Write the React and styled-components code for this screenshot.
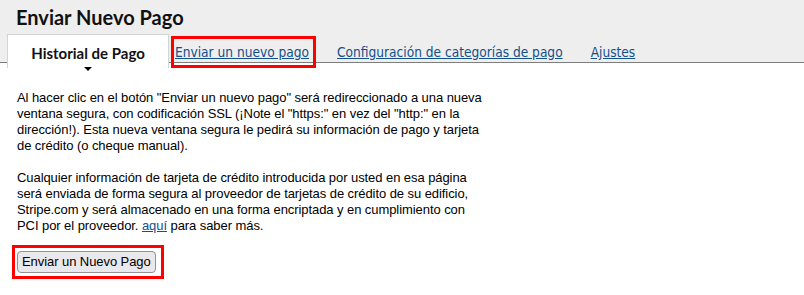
import React from 'react'
import styled, { createGlobalStyle, css } from 'styled-components'

const GlobalStyle = createGlobalStyle`
  html, body {
    margin: 0;
    padding: 0;
    background: #ffffff;
  }
  body {
    font-family: "Liberation Sans", Arial, sans-serif;
    color: #000;
  }
`

const Page = styled.div`
  width: 804px;
  min-height: 295px;
  background: #ffffff;
`

const Header = styled.header`
  background: #eeeeee;
  padding-top: 4px;
`

const Title = styled.h1`
  margin: 0 0 0 16px;
  height: 30px;
  font-family: Lato, "Noto Sans", sans-serif;
  font-weight: 700;
  font-size: 20px;
  line-height: 26px;
  color: #111;
`

const TabBar = styled.nav`
  display: flex;
  align-items: flex-start;
  padding-left: 7px;
  height: 28px;
  border-bottom: 1px solid #7d7d7d;
`

const ActiveTab = styled.div`
  display: flex;
  flex-direction: column;
  align-items: center;
  flex: 0 0 auto;
  width: 162px;
  height: 34px;
  box-sizing: border-box;
  padding-top: 9px;
  background: #ffffff;
  border: 1px solid #d4d4d4;
  border-bottom: none;
  font-family: Lato, "Noto Sans", sans-serif;
  font-weight: 700;
  font-size: 15px;
  line-height: 18px;
  color: #111;
  position: relative;
  z-index: 1;
`

const Caret = styled.span`
  margin-top: 5px;
  width: 0;
  height: 0;
  border-left: 4px solid transparent;
  border-right: 4px solid transparent;
  border-top: 4px solid #000;
`

const highlight = css`
  position: relative;
  &::after {
    content: '';
    position: absolute;
    border: 3px solid #ff0000;
    pointer-events: none;
  }
`

const TabLink = styled.a`
  margin-left: ${p => (p.$first ? '6px' : '28px')};
  padding-top: 10px;
  font-family: "DejaVu Sans Condensed", "DejaVu Sans", sans-serif;
  font-stretch: condensed;
  font-size: 13.6px;
  line-height: 16px;
  color: #12508c;
  text-decoration: underline;
  cursor: pointer;
  ${p =>
    p.$marked &&
    css`
      ${highlight}
      &::after {
        top: 2px;
        left: -4px;
        right: -7px;
        bottom: -8px;
      }
    `}
`

const Content = styled.main`
  padding: 27px 0 20px 17px;
`

const Text = styled.p`
  margin: 0 0 16px;
  width: 472px;
  font-size: 13px;
  line-height: 16px;
  letter-spacing: -0.07px;
`

const InlineLink = styled.a`
  color: #12508c;
  text-decoration: underline;
`

const ButtonMark = styled.span`
  display: inline-block;
  margin-top: 1px;
  ${p =>
    p.$marked &&
    css`
      ${highlight}
      &::after {
        top: -6px;
        left: -5px;
        right: -8px;
        bottom: -6px;
      }
    `}
`

const Button = styled.button`
  display: block;
  font-family: "Liberation Sans", Arial, sans-serif;
  font-size: 13px;
  line-height: 16px;
  letter-spacing: -0.07px;
  height: 22px;
  padding: 1px 4px;
  color: #000;
  background: #e9e9ed;
  border: 1px solid #8f8f9d;
  border-radius: 4px;
  cursor: pointer;
`

export default function App() {
  return (
    <Page>
      <GlobalStyle />
      <Header>
        <Title>Enviar Nuevo Pago</Title>
        <TabBar>
          <ActiveTab>
            Historial de Pago
            <Caret />
          </ActiveTab>
          <TabLink $first $marked>Enviar un nuevo pago</TabLink>
          <TabLink>Configuración de categorías de pago</TabLink>
          <TabLink>Ajustes</TabLink>
        </TabBar>
      </Header>
      <Content>
        <Text>
          Al hacer clic en el botón "Enviar un nuevo pago" será redireccionado a una nueva
          ventana segura, con codificación SSL (¡Note el "https:" en vez del "http:" en la
          dirección!). Esta nueva ventana segura le pedirá su información de pago y tarjeta
          de crédito (o cheque manual).
        </Text>
        <Text>
          Cualquier información de tarjeta de crédito introducida por usted en esa página
          será enviada de forma segura al proveedor de tarjetas de crédito de su edificio,
          Stripe.com y será almacenado en una forma encriptada y en cumplimiento con PCI
          por el proveedor. <InlineLink>aquí</InlineLink> para saber más.
        </Text>
        <ButtonMark $marked>
          <Button type="button">Enviar un Nuevo Pago</Button>
        </ButtonMark>
      </Content>
    </Page>
  )
}
